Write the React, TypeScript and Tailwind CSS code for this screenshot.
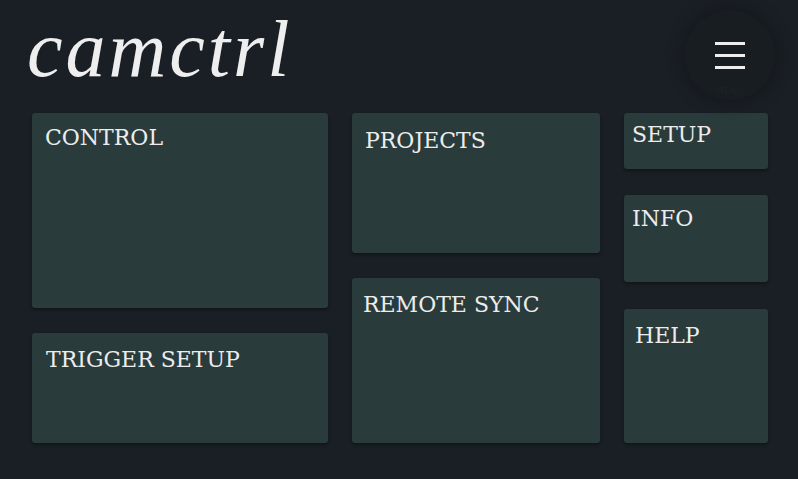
import React from "react";

const serif = { fontFamily: '"DejaVu Serif", serif' };

function Card({ label, className }: { label: string; className: string }) {
  return (
    <div
      className={`rounded-[3px] bg-[#2a3b3b] shadow-[0_2px_3px_rgba(0,0,0,0.35)] text-[22px] leading-none text-[#ececec] ${className}`}
      style={serif}
    >
      {label}
    </div>
  );
}

export default function App() {
  return (
    <div className="w-[798px] h-[479px] bg-[#1a1f25] overflow-hidden">
      <header className="h-[113px] flex items-start justify-between pl-[27px] pr-[23px]">
        <h1
          className="mt-[9px] text-[80px] leading-none italic tracking-[3px] text-[#eeeeee]"
          style={{ fontFamily: '"Liberation Serif", serif' }}
        >
          camctrl
        </h1>
        <div className="mt-[10px] relative w-[90px] h-[90px] rounded-full bg-[#181d22] shadow-[0_0_12px_6px_rgba(20,24,28,0.6)] flex flex-col items-center justify-center gap-[9px]">
          <span className="block w-[30px] h-[3px] bg-[#eeeeee]" />
          <span className="block w-[30px] h-[3px] bg-[#eeeeee]" />
          <span className="block w-[30px] h-[3px] bg-[#eeeeee]" />
          <span
            className="absolute bottom-[2px] text-[9px] text-[#1d2227] tracking-wider"
            style={{ fontFamily: '"DejaVu Sans", sans-serif' }}
          >
            MENU
          </span>
        </div>
      </header>
      <main className="flex gap-[24px] pl-[32px]">
        <div className="flex flex-col gap-[25px] w-[296px]">
          <Card label="CONTROL" className="h-[195px] pl-[13px] pt-[14px]" />
          <Card label="TRIGGER SETUP" className="h-[110px] pl-[14px] pt-[16px]" />
        </div>
        <div className="flex flex-col gap-[25px] w-[248px]">
          <Card label="PROJECTS" className="h-[140px] pl-[13px] pt-[17px]" />
          <Card label="REMOTE SYNC" className="h-[165px] pl-[11px] pt-[16px]" />
        </div>
        <div className="flex flex-col w-[144px]">
          <Card label="SETUP" className="h-[56px] pl-[8px] pt-[11px]" />
          <Card label="INFO" className="mt-[26px] h-[87px] pl-[8px] pt-[13px]" />
          <Card label="HELP" className="mt-[27px] h-[134px] pl-[11px] pt-[16px]" />
        </div>
      </main>
    </div>
  );
}
